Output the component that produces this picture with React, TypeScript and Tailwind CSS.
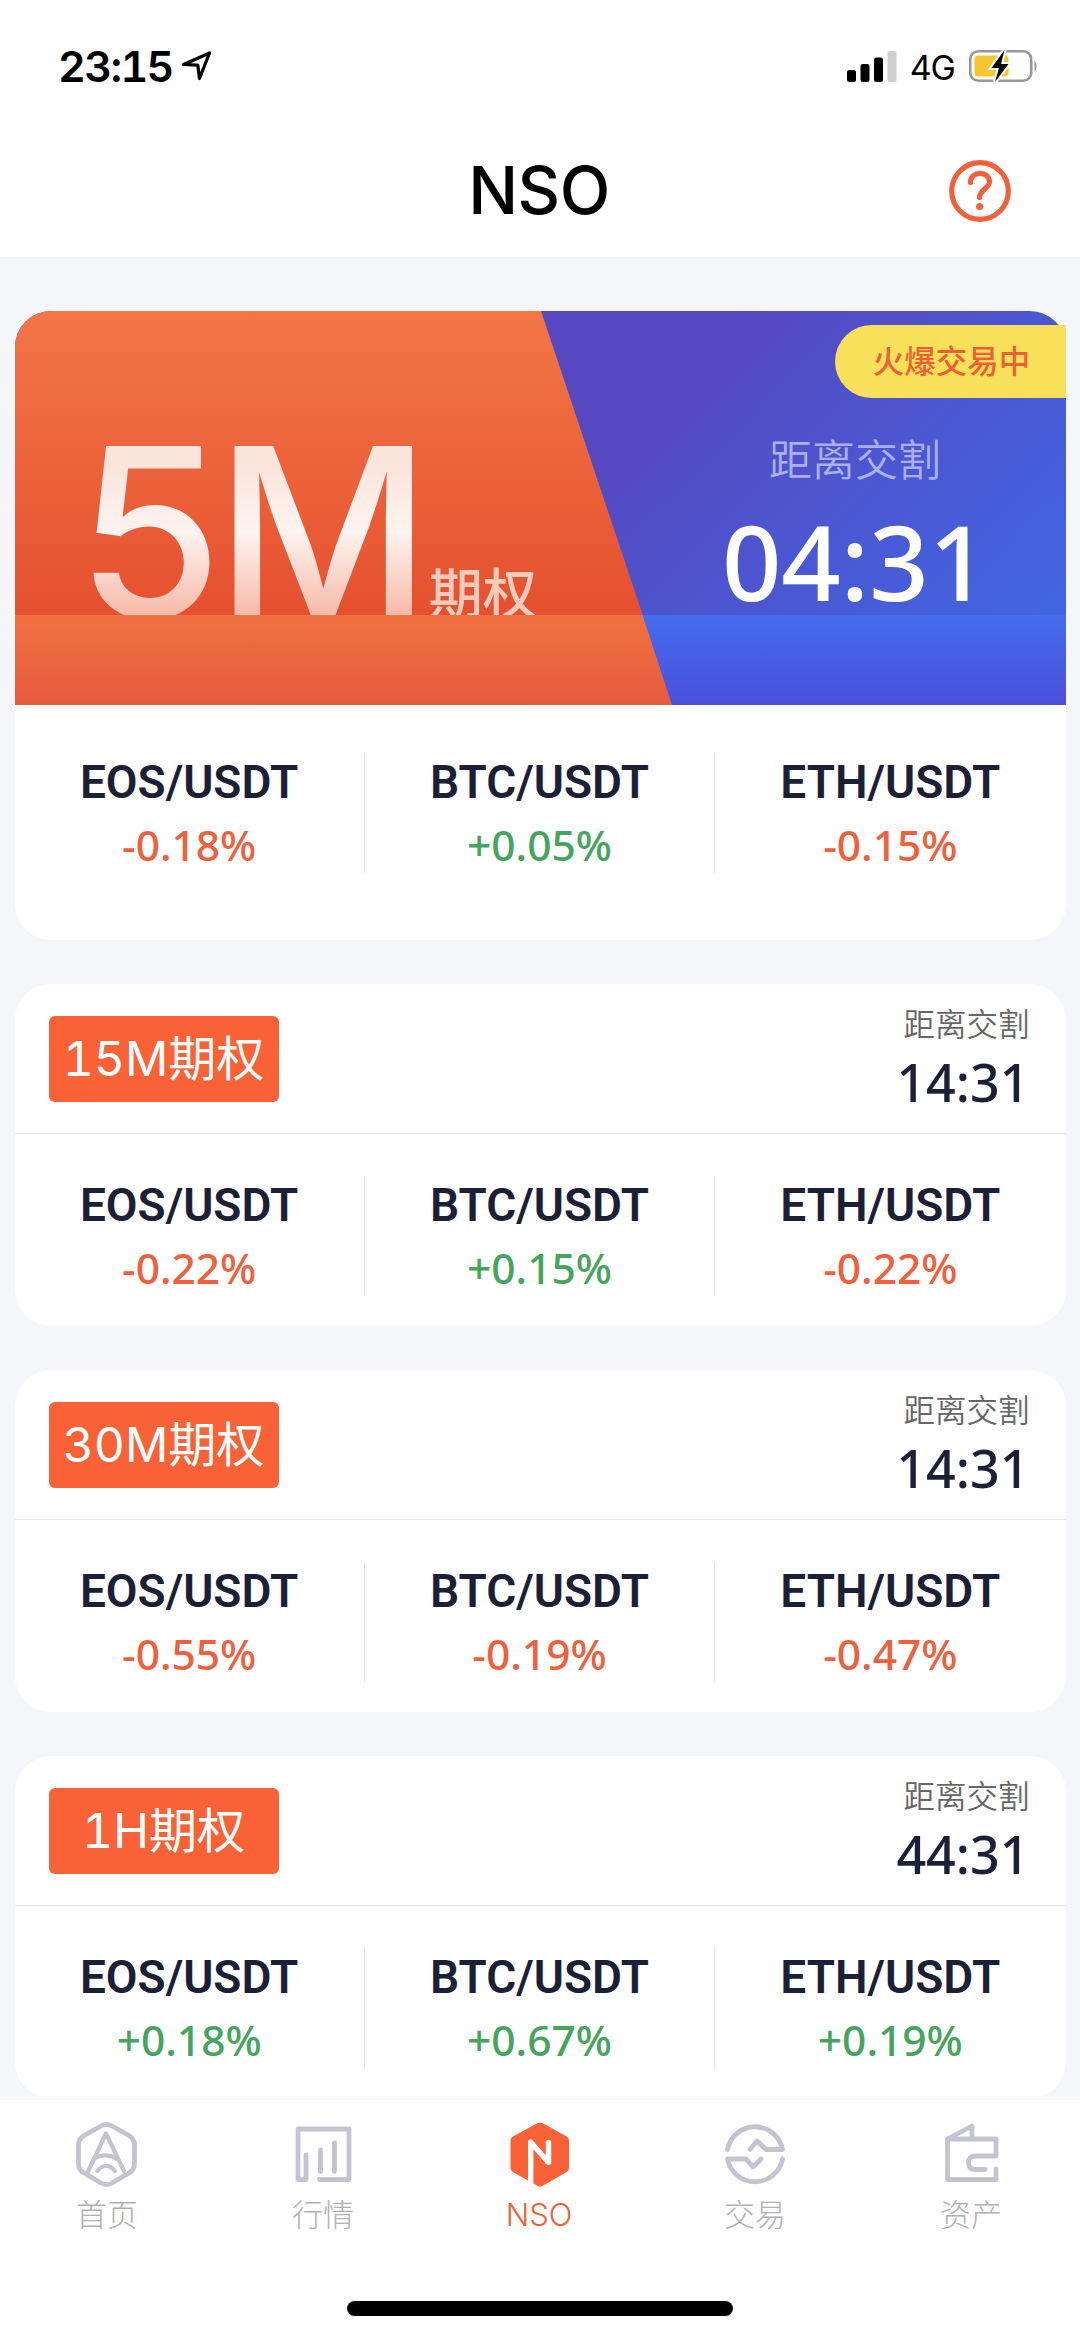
import { ReactNode } from 'react';

type Pair = { name: string; change: string };

const options: { label: string; countdown: string; pairs: Pair[] }[] = [
  {
    label: '15M期权',
    countdown: '14:31',
    pairs: [
      { name: 'EOS/USDT', change: '-0.22%' },
      { name: 'BTC/USDT', change: '+0.15%' },
      { name: 'ETH/USDT', change: '-0.22%' },
    ],
  },
  {
    label: '30M期权',
    countdown: '14:31',
    pairs: [
      { name: 'EOS/USDT', change: '-0.55%' },
      { name: 'BTC/USDT', change: '-0.19%' },
      { name: 'ETH/USDT', change: '-0.47%' },
    ],
  },
  {
    label: '1H期权',
    countdown: '44:31',
    pairs: [
      { name: 'EOS/USDT', change: '+0.18%' },
      { name: 'BTC/USDT', change: '+0.67%' },
      { name: 'ETH/USDT', change: '+0.19%' },
    ],
  },
];

const hotPairs: Pair[] = [
  { name: 'EOS/USDT', change: '-0.18%' },
  { name: 'BTC/USDT', change: '+0.05%' },
  { name: 'ETH/USDT', change: '-0.15%' },
];

function StatusBar() {
  return (
    <div className="flex h-[132px] items-center justify-between pr-[41px] pl-[58px]">
      <div className="flex items-center gap-[8px]">
        <span className="text-[43px] leading-none font-semibold tracking-[-1.6px] tabular-nums">23:15</span>
        <svg width="32" height="32" viewBox="0 0 32 32" fill="none" stroke="#000" strokeWidth="3.2" strokeLinejoin="round">
          <path d="M2.5 14.5 L28.5 3 L18.5 28.5 L16.8 15.2 Z" />
        </svg>
      </div>
      <div className="flex items-center">
        <svg width="50" height="32" viewBox="0 0 50 32">
          <rect x="0" y="20" width="9" height="12" rx="2.5" />
          <rect x="13.5" y="14" width="9" height="18" rx="2.5" />
          <rect x="27" y="7.5" width="9" height="24.5" rx="2.5" />
          <rect x="40.5" y="1" width="9" height="31" rx="2.5" fill="#cfcfcf" />
        </svg>
        <span className="mt-[3px] ml-[13px] text-[34px] leading-none tracking-[-1px]">4G</span>
        <svg className="ml-[14px]" width="70" height="36" viewBox="0 0 70 36">
          <rect x="1.2" y="3.2" width="61" height="29.5" rx="8" fill="none" stroke="#98989c" strokeWidth="2.6" />
          <path d="M65.5 12.5 Q70 18 65.5 23.5 Z" fill="#98989c" />
          <rect x="5.5" y="7.5" width="34" height="21" rx="3.5" fill="#f7c531" />
          <path d="M35.5 2 L22.5 20 H30 L26 34 L39.5 16 H32 Z" stroke="#fff" strokeWidth="4" />
          <path d="M35.5 2 L22.5 20 H30 L26 34 L39.5 16 H32 Z" />
        </svg>
      </div>
    </div>
  );
}

function Header() {
  return (
    <div className="grid h-[125px] grid-cols-3 items-center">
      <h1 className="col-start-2 pr-[2px] pb-[9px] text-center text-[66px] leading-none font-medium tracking-[-0.5px]">NSO</h1>
      <svg className="mb-[8px] ml-auto mr-[68px]" width="64" height="64" viewBox="0 0 64 64" fill="none" stroke="#f0603a" strokeWidth="5.2" strokeLinecap="round">
        <circle cx="32" cy="32" r="28.3" />
        <path d="M22.5 23.5 C22.5 11.5 41.5 11.5 41.5 23 C41.5 29 31.5 31 31.5 38.5" />
        <circle cx="31.7" cy="47.5" r="3.6" fill="#f0603a" stroke="none" />
      </svg>
    </div>
  );
}

function PairRow({ pairs }: { pairs: Pair[] }) {
  return (
    <div className="grid grid-cols-3 divide-x divide-[#e6e6ea]">
      {pairs.map((pair) => (
        <div key={pair.name} className="flex h-[120px] flex-col items-center">
          <span className="mt-[5px] font-[Roboto] text-[46px] leading-[48px] font-semibold text-[#1b2036]">{pair.name}</span>
          <span
            className={`mt-[12px] font-['Noto_Sans'] text-[42.5px] leading-[54px] font-medium ${
              pair.change.startsWith('+') ? 'text-[#45a55d]' : 'text-[#f0603c]'
            }`}
          >
            {pair.change}
          </span>
        </div>
      ))}
    </div>
  );
}

function HotCard() {
  return (
    <section className="h-[629px] rounded-[36px] bg-white">
      <div className="relative h-[394px]">
        <svg className="absolute inset-0 rounded-t-[36px]" width="1051" height="305" viewBox="0 0 1051 305">
          <defs>
            <linearGradient id="orange" x1="0" y1="0" x2="0" y2="1">
              <stop offset="0" stopColor="#f37647" />
              <stop offset="1" stopColor="#e5502f" />
            </linearGradient>
            <linearGradient id="blue" gradientUnits="userSpaceOnUse" x1="690" y1="20" x2="1000" y2="330">
              <stop offset="0" stopColor="#5648c0" />
              <stop offset="1" stopColor="#4265e2" />
            </linearGradient>
          </defs>
          <rect width="1051" height="305" fill="url(#blue)" />
          <path d="M0 0 H526 L628 305 H0 Z" fill="url(#orange)" />
        </svg>
        <div className="relative flex h-full">
          <div className="flex w-[600px] items-start pl-[62px]">
            <span className="mt-[81px] bg-linear-to-b from-[#fae4db] from-25% via-[#fdf3ef] via-50% to-[#f6b9a8] to-80% bg-clip-text pr-[5px] text-[236px] leading-[280px] font-[450] tracking-[-7px] text-transparent">
              5M
            </span>
            <span className="mt-[254px] text-[54px] leading-[60px] font-medium text-[#f8cabc]">期权</span>
          </div>
          <div className="flex flex-1 flex-col items-end">
            <span className="mt-[14px] flex h-[73px] w-[231px] items-center justify-center rounded-l-full bg-[#f9e05a] pl-[3px] text-[31.5px] font-medium text-[#ee6033]">
              火爆交易中
            </span>
            <div className="mt-[34px] flex w-[423px] flex-col items-center pl-[2px]">
              <span className="text-[43px] leading-[56px] font-[350] text-[#a9b1ec]">距离交割</span>
              <span className="mt-[23px] font-['Noto_Sans'] text-[104px] leading-[100px] font-[550] text-white">04:31</span>
            </div>
          </div>
        </div>
        {/* floor that the lettering stands behind */}
        <svg className="absolute bottom-0 left-0" width="1051" height="90" viewBox="0 0 1051 90">
          <defs>
            <linearGradient id="orangeFloor" x1="0" y1="0" x2="0" y2="1">
              <stop offset="0" stopColor="#f07240" />
              <stop offset="1" stopColor="#e75a3f" />
            </linearGradient>
            <linearGradient id="blueFloor" x1="0" y1="0" x2="0" y2="1">
              <stop offset="0" stopColor="#446cec" />
              <stop offset="1" stopColor="#4a50dc" />
            </linearGradient>
          </defs>
          <rect width="1051" height="90" fill="url(#blueFloor)" />
          <path d="M0 0 H627.5 L657 90 H0 Z" fill="url(#orangeFloor)" />
        </svg>
      </div>
      <div className="pt-[48px]">
        <PairRow pairs={hotPairs} />
      </div>
    </section>
  );
}

function OptionCard({ label, countdown, pairs }: { label: string; countdown: string; pairs: Pair[] }) {
  return (
    <section className="h-[342px] rounded-[36px] bg-white">
      <div className="flex h-[150px] justify-between border-b border-[#e6e6ea] pr-[36px] pl-[34px]">
        <span className="mt-[32px] flex h-[86px] w-[230px] items-center justify-center rounded-md bg-[#f96237] pb-[1px] text-[48px] leading-none font-[420] text-white tabular-nums">
          {label}
        </span>
        <div className="flex flex-col items-end">
          <span className="mt-[20px] text-[31.5px] leading-[42px] font-[350] text-[#666]">距离交割</span>
          <span className="mt-[6px] font-['Noto_Sans'] text-[52px] leading-[60px] font-[550] text-[#1b2036]">{countdown}</span>
        </div>
      </div>
      <div className="pt-[42px]">
        <PairRow pairs={pairs} />
      </div>
    </section>
  );
}

function Icon({ children }: { children: ReactNode }) {
  return (
    <svg width="72" height="72" viewBox="0 0 72 72" fill="none" stroke="currentColor" strokeWidth="4.8" strokeLinecap="round" strokeLinejoin="round">
      {children}
    </svg>
  );
}

const tabs = [
  {
    label: '首页',
    icon: (
      <Icon>
        <path d="M29 8 Q34.4 5 40 8 L57 17.5 Q62.5 21 62.5 27 V46 Q62.5 52 57 55 L40 65 Q34.4 68 29 65 L12 55 Q6.5 52 6.5 46 V27 Q6.5 21 12 17.5 Z" />
        <path d="M15 55.5 L34 15.5 L52 53" strokeWidth="4.2" />
        <path d="M23 40 Q34 34.5 45 41 M25.5 53 Q34 42.5 43 53" strokeWidth="4.2" />
      </Icon>
    ),
  },
  {
    label: '行情',
    icon: (
      <Icon>
        <path d="M18 37 V61.5 H10 V11 H61 V61.5 H31.5" />
        <path d="M32.5 32 V53.5 M46.5 25 V53.5" />
      </Icon>
    ),
  },
  {
    label: 'NSO',
    active: true,
    icon: (
      <Icon>
        <path d="M36 9 L60.5 22.5 V50 L36 64 L11 50 V22.5 Z" fill="currentColor" strokeWidth="9" />
        <path d="M26.7 72 V24 L44.5 44.5 V24.5" stroke="#fff" strokeWidth="5.4" />
      </Icon>
    ),
  },
  {
    label: '交易',
    icon: (
      <Icon>
        <path d="M7.5 31.5 A28 28 0 0 1 62.5 31.5 H46 L37 23 L30 31.5" />
        <path d="M62.5 41 A28 28 0 0 1 7.5 41 H26 L33 49 L41 41" />
      </Icon>
    ),
  },
  {
    label: '资产',
    icon: (
      <Icon>
        <path d="M60 51 V61.5 H11.5 V21 H60 V38 H39 Q32.5 38 32.5 44.5 Q32.5 51.5 39 51.5 H49" />
        <path d="M11.5 21 L36 8 V20" />
      </Icon>
    ),
  },
];

function TabBar() {
  return (
    <nav className="relative z-10 h-[243px] border-t-4 border-[#f8f8f9] bg-white">
      <div className="grid grid-cols-5 pt-[18px]">
        {tabs.map((tab) => (
          <div key={tab.label} className={`flex flex-col items-center ${tab.active ? 'text-[#f96237]' : 'text-[#c4c3d1]'}`}>
            {tab.icon}
            <span className={`mt-[4px] mr-[2px] text-[31px] leading-[42px] font-light ${tab.active ? 'text-[#ee5f3b]' : 'text-[#b0b0b5]'}`}>
              {tab.label}
            </span>
          </div>
        ))}
      </div>
      <div className="mx-auto mt-[65px] h-[15px] w-[386px] rounded-full bg-black" />
    </nav>
  );
}

export default function App() {
  return (
    <div className="flex h-[2339px] w-[1080px] flex-col overflow-hidden bg-[#f5f6fa] font-[Inter,'Noto_Sans_CJK_SC',sans-serif] text-black">
      <div className="h-[257px] shrink-0 bg-white">
        <StatusBar />
        <Header />
      </div>
      <main className="flex h-[1839px] flex-col gap-[44px] overflow-hidden px-[14.5px] pt-[54px] *:shrink-0">
        <HotCard />
        {options.map((option) => (
          <OptionCard key={option.label} {...option} />
        ))}
      </main>
      <TabBar />
    </div>
  );
}
